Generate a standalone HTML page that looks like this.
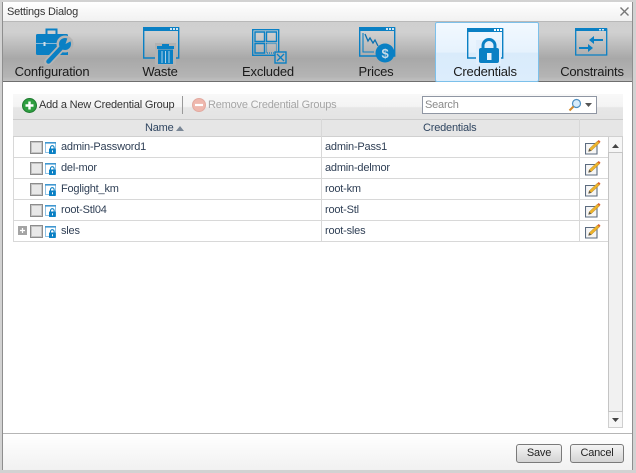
<!DOCTYPE html>
<html><head><meta charset="utf-8"><style>
html,body{margin:0;padding:0}
body{width:636px;height:473px;position:relative;overflow:hidden;background:#fff;font-family:"Liberation Sans",sans-serif;font-size:11px;letter-spacing:-.2px;color:#333}
div,svg{position:absolute;box-sizing:border-box}
.t{white-space:nowrap;line-height:14px}
.tab{top:64px;font-size:13px;letter-spacing:-.2px;color:#1a1a1a;text-align:center;line-height:15px;white-space:nowrap}
.line{background:#d8d8d8;left:13px;width:595px;height:1px}
.cb{left:30px;width:13px;height:13px;border:1px solid #8c8c8c;background:#e8e8e8;box-shadow:inset 0 0 0 1px #c4c4c4}
.n{left:61px;color:#2f3f55}
.c{left:325px;color:#2f3f55}
.btn{top:444px;height:19px;border:1px solid #7a7a7a;border-radius:3px;background:linear-gradient(#f4f4f4,#d4d4d4);text-align:center;line-height:17px;color:#222}
</style></head><body>
<div style="left:0;top:0;width:636px;height:473px;background:#d2d2d2"></div>
<div style="left:2px;top:2px;width:631px;height:468px;background:#fff;border-left:1px solid #8e8e8e;border-right:1px solid #8e8e8e"></div>
<div style="left:3px;top:2px;width:629px;height:19px;background:linear-gradient(#fff,#f1f1f1)"></div>
<div class="t" style="left:7px;top:5px;color:#333">Settings Dialog</div>
<svg style="left:619px;top:6px" width="11" height="11" viewBox="0 0 11 11"><path d="M1.500 1.500L9.500 9.500M9.500 1.500L1.500 9.500" stroke="#777" stroke-width="1.400" fill="none"/></svg>

<div style="left:3px;top:21px;width:629px;height:61px;background:linear-gradient(#cfcfcf,#d0d0d0 18%,#a8a8a8 62%,#b4b4b4 92%,#c0c0c0);border-top:1px solid #b8b8b8;border-bottom:1px solid #6f6f6f"></div>
<div style="left:435px;top:22px;width:104px;height:60px;border:1px solid #7cc0ea;border-radius:2px;background:linear-gradient(#f2f9ff,#e6f2fd 50%,#d9ebfb 52%,#dcedfc)"></div>

<!-- Configuration icon -->
<svg style="left:34px;top:27px" width="40" height="38" viewBox="0 0 40 38">
<path d="M12.500 7V2.500h10V7" fill="none" stroke="#0a80c4" stroke-width="2"/>
<path d="M2 8.500Q2 7 3.500 7h29Q34 7 34 8.500V28H3.500Q2 28 2 26.500z" fill="#0a80c4"/>
<path d="M2 16.500h32" stroke="#b5cddc" stroke-width=".8"/>
<rect x="9.500" y="15" width="2" height="4" fill="#cfe0ea"/>
<path d="M14 35L28 20" stroke="#b4b4b4" stroke-width="8" stroke-linecap="round"/>
<circle cx="31" cy="17" r="8.500" fill="#b4b4b4"/>
<path d="M14.500 34.500L28 20" stroke="#0a80c4" stroke-width="4.500" stroke-linecap="round"/>
<circle cx="31" cy="17" r="6" fill="#0a80c4"/>
<path d="M31.500 17L34 9.500l5 3.500z" fill="#b4b4b4"/>
</svg>
<!-- Waste icon -->
<svg style="left:143px;top:27px" width="37" height="38" viewBox="0 0 37 38">
<path d="M.700 1h35v30H.700z" fill="none" stroke="#0a80c4" stroke-width="1.400"/>
<rect x="0" y="0" width="36" height="4" fill="#0a80c4"/>
<rect x="27" y="1" width="2" height="2" fill="#cfe6f5"/><rect x="30" y="1" width="2" height="2" fill="#cfe6f5"/><rect x="33" y="1" width="2" height="2" fill="#cfe6f5"/>
<rect x="12" y="16" width="21" height="22" fill="#b2b2b2"/>
<rect x="14" y="19" width="17" height="3" fill="#0a80c4"/>
<rect x="19" y="17" width="7" height="2" fill="#0a80c4"/>
<path d="M15 22.500h15V37H15z" fill="#0a80c4"/>
<path d="M19 24v12M22.500 24v12M26 24v12" stroke="#a9cfe6" stroke-width="1"/>
</svg>
<!-- Excluded icon -->
<svg style="left:252px;top:29px" width="35" height="35" viewBox="0 0 35 35" fill="none" stroke="#0a80c4">
<path d="M.700.700h26v25.600H.700z" stroke-width="1.400"/>
<path d="M3 3h9.500v9.500H3zM14.500 3H24.500v9.500H14.500zM3 14.500h9.500V24H3z" stroke-width="1.400"/>
<path d="M14.500 14.500H24.500V24H14.500z" stroke-dasharray="1 1" stroke-width="1.200"/>
<rect x="23" y="23" width="11" height="11" fill="#b2b2b2" stroke-width="1.400"/>
<path d="M25 25l7 7M32 25l-7 7" stroke-width="1.300"/>
</svg>
<!-- Prices icon -->
<svg style="left:359px;top:27px" width="37" height="37" viewBox="0 0 37 37">
<path d="M.700 1h35v28H.700z" fill="none" stroke="#0a80c4" stroke-width="1.400"/>
<rect x="0" y="0" width="36" height="4" fill="#0a80c4"/>
<rect x="27" y="1" width="2" height="2" fill="#cfe6f5"/><rect x="30" y="1" width="2" height="2" fill="#cfe6f5"/><rect x="33" y="1" width="2" height="2" fill="#cfe6f5"/>
<path d="M4 6v19h11" fill="none" stroke="#0a80c4" stroke-width="1.100"/>
<path d="M6 7l3 7 2-3 3 5 2-3 3 6" fill="none" stroke="#0a70b0" stroke-width="1.300"/>
<circle cx="26" cy="26" r="9.500" fill="#0a80c4"/>
<text x="26" y="31" text-anchor="middle" font-family="Liberation Sans" font-weight="bold" font-size="13" fill="#c5dbe8">$</text>
</svg>
<!-- Credentials icon -->
<svg style="left:467px;top:28px" width="37" height="36" viewBox="0 0 37 36">
<path d="M.700 1h35v29H.700z" fill="none" stroke="#0a80c4" stroke-width="1.400"/>
<rect x="0" y="0" width="36" height="4" fill="#0a80c4"/>
<rect x="27" y="1" width="2" height="2" fill="#fff"/><rect x="30" y="1" width="2" height="2" fill="#fff"/><rect x="33" y="1" width="2" height="2" fill="#fff"/>
<rect x="9" y="12" width="25" height="24" fill="#e2effc"/>
<path d="M16 21v-3.500a6 6 0 0 1 12 0V21" fill="none" stroke="#0a80c4" stroke-width="3"/>
<rect x="12" y="20" width="20" height="15" rx="2" fill="#0a80c4"/>
<rect x="20" y="25" width="4.500" height="7" fill="#e6f2fc"/>
</svg>
<!-- Constraints icon -->
<svg style="left:575px;top:28px" width="33" height="28" viewBox="0 0 33 28">
<path d="M.700 1h31v26H.700z" fill="none" stroke="#0a80c4" stroke-width="1.300"/>
<rect x="0" y="0" width="32" height="3" fill="#0a80c4"/>
<rect x="24" y="1" width="2" height="1.500" fill="#cfe6f5"/><rect x="27" y="1" width="2" height="1.500" fill="#cfe6f5"/>
<path d="M14 12l5-4v8z" fill="#0a80c4"/><path d="M18 11h10v2H18z" fill="#0a80c4"/>
<path d="M18 20l-5-4v8z" fill="#0a80c4"/><path d="M4 19h10v2H4z" fill="#0a80c4"/>
</svg>

<div class="tab" style="left:2px;width:100px">Configuration</div>
<div class="tab" style="left:110px;width:100px">Waste</div>
<div class="tab" style="left:218px;width:100px">Excluded</div>
<div class="tab" style="left:326px;width:100px">Prices</div>
<div class="tab" style="left:435px;width:100px">Credentials</div>
<div class="tab" style="left:542px;width:100px">Constraints</div>

<!-- toolbar -->
<div style="left:13px;top:94px;width:610px;height:25px;background:linear-gradient(#f8f8f8,#f4f4f4 50%,#e6e6e6 55%,#e4e4e4)"></div>
<svg style="left:22px;top:98px" width="15" height="15" viewBox="0 0 15 15"><circle cx="7.500" cy="7.500" r="7" fill="#2e9e40" stroke="#1f7a30"/><path d="M7.500 3.500v8M3.500 7.500h8" stroke="#fff" stroke-width="2.400"/></svg>
<div class="t" style="left:39px;top:98px;color:#333">Add a New Credential Group</div>
<div style="left:182px;top:96px;width:1px;height:18px;background:#999"></div>
<svg style="left:192px;top:98px" width="14" height="14" viewBox="0 0 14 14"><circle cx="7" cy="7" r="6.500" fill="#efb8ae" stroke="#e2aaa0"/><path d="M3 7h8" stroke="#fff" stroke-width="2.200"/></svg>
<div class="t" style="left:208px;top:98px;color:#a5a5a5">Remove Credential Groups</div>
<div style="left:422px;top:96px;width:175px;height:18px;background:#fff;border:1px solid #8f96a3"></div>
<div class="t" style="left:425px;top:98px;color:#8a8a8a">Search</div>
<svg style="left:568px;top:98px" width="14" height="14" viewBox="0 0 14 14"><circle cx="8.500" cy="5.500" r="4" fill="#d8ecfb" stroke="#4f8fc0" stroke-width="1.200"/><path d="M5.500 8.500L1.500 12.500" stroke="#d18a2e" stroke-width="2"/></svg>
<svg style="left:585px;top:103px" width="7" height="4" viewBox="0 0 7 4"><path d="M0 0h7L3.500 4z" fill="#555"/></svg>

<!-- grid header -->
<div style="left:13px;top:119px;width:610px;height:18px;background:#e6e6e6;border-top:1px solid #ccc;border-bottom:1px solid #d0d0d0"></div>
<div style="left:321px;top:119px;width:1px;height:123px;background:#d8d8d8"></div>
<div style="left:579px;top:119px;width:1px;height:123px;background:#d8d8d8"></div>
<div class="t" style="left:145px;top:121px;color:#2f4560">Name</div>
<svg style="left:176px;top:126px" width="8" height="5" viewBox="0 0 8 5"><path d="M0 5L4 0l4 5z" fill="#7a8796"/></svg>
<div class="t" style="left:423px;top:121px;color:#2f4560">Credentials</div>
<div style="left:13px;top:137px;width:1px;height:105px;background:#d8d8d8"></div>

<div class="line" style="top:157px"></div>
<div class="line" style="top:178px"></div>
<div class="line" style="top:199px"></div>
<div class="line" style="top:220px"></div>
<div class="line" style="top:241px"></div>

<!-- rows -->
<div class="cb" style="top:141px"></div><div class="cb" style="top:162px"></div><div class="cb" style="top:183px"></div><div class="cb" style="top:204px"></div><div class="cb" style="top:225px"></div>
<svg style="left:45px;top:141px" width="12" height="14" viewBox="0 0 12 14"><use href="#lk"/></svg>
<svg style="left:45px;top:162px" width="12" height="14" viewBox="0 0 12 14"><use href="#lk"/></svg>
<svg style="left:45px;top:183px" width="12" height="14" viewBox="0 0 12 14"><use href="#lk"/></svg>
<svg style="left:45px;top:204px" width="12" height="14" viewBox="0 0 12 14"><use href="#lk"/></svg>
<svg style="left:45px;top:225px" width="12" height="14" viewBox="0 0 12 14"><use href="#lk"/></svg>
<svg width="0" height="0" style="left:0;top:0"><defs><g id="lk"><path d="M.500 1.500h10v10H.500z" fill="#fff" stroke="#8fc3e6"/><rect x="0" y="1" width="11" height="1.600" fill="#3f97d0"/><path d="M5.500 8V6.500a1.800 1.800 0 0 1 3.600 0V8" fill="none" stroke="#0a80c4" stroke-width="1.100"/><rect x="4" y="7.500" width="6.800" height="5.500" rx=".5" fill="#0a80c4"/><rect x="7" y="9.300" width="1" height="2" fill="#fff"/></g>
<g id="ed"><path d="M.500 3.500H12V14H.500z" fill="#f6f6f6" stroke="#5b6b7f" stroke-width="1.100"/><path d="M3.500 11.500l.8-2.800 8.200-7.700 2 2-8.200 7.700z" fill="#eeb32a" stroke="#9a7a30" stroke-width=".4"/><path d="M12.500 1l1.300-1 1.700 1.700-1 1.300z" fill="#e0602a"/><path d="M3.500 11.500l.8-2.800 2 2z" fill="#555"/></g></defs></svg>
<div class="t n" style="top:140px">admin-Password1</div>
<div class="t n" style="top:161px">del-mor</div>
<div class="t n" style="top:182px">Foglight_km</div>
<div class="t n" style="top:203px">root-Stl04</div>
<div class="t n" style="top:224px">sles</div>
<div class="t c" style="top:140px">admin-Pass1</div>
<div class="t c" style="top:161px">admin-delmor</div>
<div class="t c" style="top:182px">root-km</div>
<div class="t c" style="top:203px">root-Stl</div>
<div class="t c" style="top:224px">root-sles</div>
<svg style="left:585px;top:140px" width="16" height="16" viewBox="0 0 16 16"><use href="#ed"/></svg>
<svg style="left:585px;top:161px" width="16" height="16" viewBox="0 0 16 16"><use href="#ed"/></svg>
<svg style="left:585px;top:182px" width="16" height="16" viewBox="0 0 16 16"><use href="#ed"/></svg>
<svg style="left:585px;top:203px" width="16" height="16" viewBox="0 0 16 16"><use href="#ed"/></svg>
<svg style="left:585px;top:224px" width="16" height="16" viewBox="0 0 16 16"><use href="#ed"/></svg>
<svg style="left:18px;top:226px" width="9" height="9" viewBox="0 0 9 9"><rect width="9" height="9" fill="#a4a4a4"/><path d="M4.500 2v5M2 4.500h5" stroke="#fff" stroke-width="1.200"/></svg>

<!-- scrollbar -->
<div style="left:608px;top:137px;width:15px;height:291px;background:#f6f6f6;border-left:1px solid #cfcfcf;border-right:1px solid #cfcfcf;border-bottom:1px solid #cfcfcf"></div>
<div style="left:608px;top:152px;width:15px;height:260px;background:#f1f1f1;border:1px solid #c4c4c4"></div>
<svg style="left:612px;top:144px" width="7" height="4" viewBox="0 0 7 4"><path d="M0 4h7L3.500 0z" fill="#444"/></svg>
<svg style="left:612px;top:418px" width="7" height="4" viewBox="0 0 7 4"><path d="M0 0h7L3.500 4z" fill="#444"/></svg>

<!-- footer -->
<div style="left:3px;top:433px;width:629px;height:37px;background:linear-gradient(#fff,#f1f1f1);border-top:1px solid #b5b5b5"></div>
<div class="btn" style="left:516px;width:46px">Save</div>
<div class="btn" style="left:570px;width:54px">Cancel</div>
</body></html>
